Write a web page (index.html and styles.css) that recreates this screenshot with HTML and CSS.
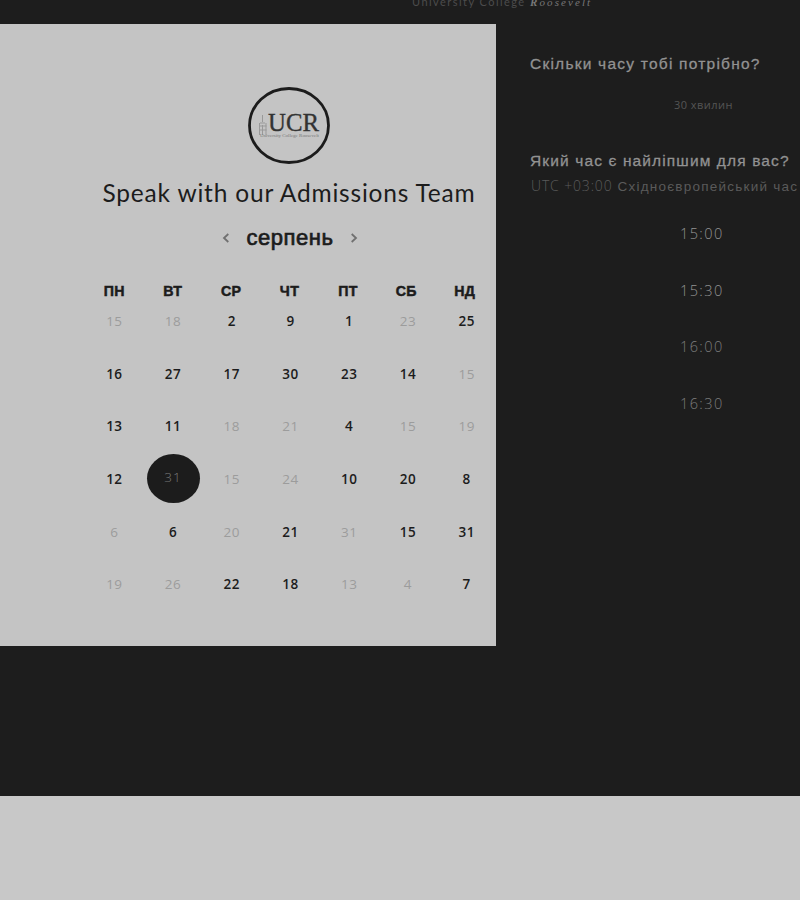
FILE: index.html
```html
<!DOCTYPE html>
<html lang="uk">
<head>
<meta charset="utf-8">
<title>Speak with our Admissions Team</title>
<link rel="stylesheet" href="styles.css">
</head>
<body>
<div class="page">
  <header class="tagline"><span class="college">University College</span><span class="roosevelt"><b>R</b>oosevelt</span></header>
  <main class="booking">
    <section class="calendar">
      <svg class="logo" width="82" height="77" viewBox="0 0 82 77" role="img" aria-label="UCR">
        <ellipse cx="41" cy="38.5" rx="39.5" ry="37" fill="none" stroke="#1c1c1c" stroke-width="2.8"/>
        <path d="M14.500 28v7M12 36h5M11.500 39h7M11.500 36v12M14.500 38v10M18 36v12M11.500 43h7" fill="none" stroke="#999" stroke-width="1"/>
        <text class="logo-u" x="20" y="44" textLength="51" lengthAdjust="spacingAndGlyphs">UCR</text>
        <text class="logo-sub" x="12" y="49.500" textLength="59" lengthAdjust="spacingAndGlyphs">University College Roosevelt</text>
      </svg>
      <h1 class="title">Speak with our Admissions Team</h1>
      <div class="month">
        <svg width="8" height="10" viewBox="0 0 8 10"><path d="M6.3 1 2 5l4.3 4"/></svg>
        <span class="month-name">серпень</span>
        <svg width="8" height="10" viewBox="0 0 8 10"><path d="M1.7 1 6 5 1.7 9"/></svg>
      </div>
      <div class="weekdays"><span>ПН</span><span>ВТ</span><span>СР</span><span>ЧТ</span><span>ПТ</span><span>СБ</span><span>НД</span></div>
      <div class="days">
        <span class="off">15</span><span class="off">18</span><span>2</span><span>9</span><span>1</span><span class="off">23</span><span>25</span>
        <span>16</span><span>27</span><span>17</span><span>30</span><span>23</span><span>14</span><span class="off">15</span>
        <span>13</span><span>11</span><span class="off">18</span><span class="off">21</span><span>4</span><span class="off">15</span><span class="off">19</span>
        <span>12</span><span class="selected">31</span><span class="off">15</span><span class="off">24</span><span>10</span><span>20</span><span>8</span>
        <span class="off">6</span><span>6</span><span class="off">20</span><span>21</span><span class="off">31</span><span>15</span><span>31</span>
        <span class="off">19</span><span class="off">26</span><span>22</span><span>18</span><span class="off">13</span><span class="off">4</span><span>7</span>
      </div>
    </section>
    <aside class="options">
      <h2 class="question duration">Скільки часу тобі потрібно?</h2>
      <p class="minutes">30 хвилин</p>
      <h2 class="question best">Який час є найліпшим для вас?</h2>
      <p class="zone"><span class="utc">UTC +03:00</span> <span class="zone-name">Східноєвропейський час</span></p>
      <ul class="slots"><li>15:00</li><li>15:30</li><li class="dim">16:00</li><li class="dim">16:30</li></ul>
    </aside>
  </main>
  <footer class="footer"></footer>
</div>
</body>
</html>
```

FILE: styles.css
```css
* { box-sizing: border-box; }
body { margin: 0; background: #1d1d1d; }
h1, h2, p, ul { margin: 0; padding: 0; }
.page { width: 800px; height: 900px; overflow: hidden; display: flex; flex-direction: column; }
.tagline { height: 29px; flex: none; margin-top: -5px; padding-left: 412px; white-space: nowrap; display: flex; gap: 7px; }
.college { font: 11px/14px Lato, sans-serif; letter-spacing: 1.45px; color: #4c4c4c; width: 111px; }
.roosevelt { font: italic 11px/14px "Liberation Serif", serif; letter-spacing: 2.1px; color: #777; }
.booking { display: flex; flex: none; height: 772px; }
.calendar { width: 496px; height: 621.5px; padding: 63px 0 0 85px; background: #c4c4c4; display: flex; flex-direction: column; align-items: center; color: #1c1c1c; }
.logo { display: block; flex: none; margin-right: 3px; }
.logo-u { font: 25px "Liberation Serif", serif; fill: #333; stroke: #333; stroke-width: .35px; }
.logo-sub { font: 4.5px "Liberation Serif", serif; fill: #777; }
.title { margin: 13px 3px 0 0; font: 400 24.5px/32px Lato, sans-serif; letter-spacing: .8px; white-space: nowrap; }
.month { display: flex; align-items: center; gap: 16px; height: 30px; margin: 14px 1px 0 0; }
.month svg { fill: none; stroke: #707070; stroke-width: 1.8; }
.month-name { font: 400 22px/30px "Liberation Sans", sans-serif; letter-spacing: .55px; -webkit-text-stroke: .7px #1c1c1c; }
.weekdays, .days { width: 411px; display: grid; grid-template-columns: repeat(7, 1fr); text-align: center; }
.weekdays { margin-top: 28px; padding-right: 2px; font: 700 14.2px/20px "Liberation Sans", sans-serif; letter-spacing: .3px; }
.weekdays span { -webkit-text-stroke: .5px #1c1c1c; }
.days { margin-top: -6px; grid-auto-rows: 52.6px; align-items: center; justify-items: center; font: 600 13.5px/20px "Open Sans", sans-serif; letter-spacing: .5px; }
.off { color: #9c9c9c; font-weight: 400; }
.selected { width: 53px; height: 49px; margin-top: -2px; border-radius: 50%; background: #1c1c1c; color: #777; font-weight: 300; line-height: 47px; letter-spacing: 1px; }
.options { width: 304px; padding: 30px 0 0 34px; white-space: nowrap; }
.question { font: 400 15.5px/20px "Liberation Sans", sans-serif; color: #929292; -webkit-text-stroke: .3px #929292; }
.duration { letter-spacing: 1.23px; }
.best { margin-top: 37px; letter-spacing: 1.12px; }
.minutes { margin-top: 22px; padding-left: 144px; font: 400 11px/18px "Open Sans", sans-serif; color: #555; letter-spacing: .45px; }
.zone { margin-top: 5px; padding-left: 1px; font: 400 13.5px/20px "Liberation Sans", sans-serif; color: #5a5a5a; letter-spacing: 1.23px; }
.utc { font: 300 14px/20px "Open Sans", sans-serif; letter-spacing: .85px; }
.slots { list-style: none; margin-top: 27px; padding-left: 150px; font: 300 14.5px/20px "Open Sans", sans-serif; letter-spacing: 1.4px; color: #939393; display: grid; gap: 36.6px; }
.dim { color: #7c7c7c; }
.footer { height: 104px; flex: none; background: #c8c8c8; }
```
